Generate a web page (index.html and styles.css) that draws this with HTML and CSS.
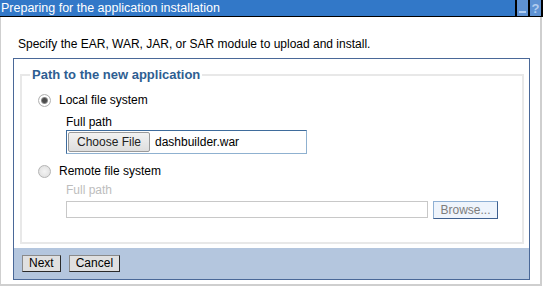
FILE: index.html
```html
<!DOCTYPE html>
<html lang="en">
<head>
  <meta charset="UTF-8" />
  <title>Preparing for the application installation</title>
  <link rel="stylesheet" href="styles.css">
</head>
<body>

<div class="window">
  <div class="titlebar">
    <span class="title">Preparing for the application installation</span>
    <svg class="tb-btns" width="28" height="16" viewBox="0 0 28 16">
      <rect x="0" y="0" width="28" height="16" fill="#000"/>
      <rect x="2" y="0" width="11" height="16" fill="#5e92d3"/>
      <rect x="15" y="0" width="11" height="16" fill="#5e92d3"/>
      <rect x="4" y="11" width="7" height="2" fill="#b2cdef"/>
      <text x="20.5" y="13" text-anchor="middle" class="tb-glyph">?</text>
    </svg>
  </div>
  <div class="body">
    <p class="intro">Specify the EAR, WAR, JAR, or SAR module to upload and install.</p>
    <div class="panel">
      <fieldset class="group">
        <legend>Path to the new application</legend>
        <label class="option"><input type="radio" name="src" checked> Local file system</label>
        <div class="field local">
          <div class="field-label">Full path</div>
          <div class="file-box">
            <button class="choose">Choose File</button>
            <span class="file-name">dashbuilder.war</span>
          </div>
        </div>
        <label class="option"><input type="radio" name="src"> Remote file system</label>
        <div class="field disabled">
          <div class="field-label">Full path</div>
          <div class="remote-row">
            <input type="text" class="remote-path" disabled>
            <button class="browse" disabled>Browse...</button>
          </div>
        </div>
      </fieldset>
      <div class="actions">
        <button class="btn">Next</button>
        <button class="btn">Cancel</button>
      </div>
    </div>
  </div>
</div>

</body>
</html>
```

FILE: styles.css
```css
body {
  margin: 0;
  font-family: "Liberation Sans", Arial, sans-serif;
  font-size: 12px;
  color: #000;
  background: #fff;
}
.window {
  width: 543px;
  height: 286px;
}
.titlebar {
  display: flex;
  justify-content: space-between;
  height: 16px;
  background: #3278c8;
  border-bottom: 1px solid #000;
  color: #fff;
}
.title {
  padding-left: 1px;
  font-size: 12.5px;
  line-height: 16px;
}
.tb-btns {
  display: block;
  flex: none;
}
.tb-glyph {
  font-family: "Liberation Sans", Arial, sans-serif;
  font-size: 13px;
  font-weight: bold;
  fill: #b2cdef;
}
.body {
  height: 267px;
  width: 539px;
  border-left: 1px solid #cfcfcf;
  border-right: 2px solid #cfcfcf;
  border-bottom: 2px solid #cfcfcf;
}
.intro {
  margin: 0;
  padding: 20px 0 0 17px;
  line-height: 15px;
}
.panel {
  margin: 6px 0 0 12px;
  width: 515px;
  border: 1px solid #4a6898;
  padding-top: 8px;
}
.group {
  margin: 0 5px 4px 6px;
  padding: 8px 0 15px 15px;
  border: 2px solid #e8e8e8;
}
.group legend {
  padding: 0 2px;
  margin-left: -7px;
  color: #2e5e92;
  font-size: 13px;
  font-weight: bold;
  line-height: 16px;
}
.option {
  display: flex;
  align-items: center;
  height: 18px;
}
.option input {
  appearance: none;
  width: 13px;
  height: 13px;
  margin: 0 8px 0 1px;
  border-radius: 50%;
  border: 1px solid #b4b4b4;
  background: radial-gradient(circle, #f4f4f4 0, #dcdcdc 100%);
}
.option input:checked {
  background: radial-gradient(circle, #4c4c4c 0, #4c4c4c 2px, #8a8a8a 3px, #fff 4px, #fff 5px, #cfcfcf 6px);
}
.field {
  padding-left: 29px;
  margin-bottom: 8px;
}
.field-label {
  line-height: 15px;
  margin: 3px 0 3px;
}
.local .field-label {
  margin: 6px 0 0;
}
.file-box {
  display: flex;
  align-items: center;
  width: 239px;
  height: 22px;
  border: 1px solid;
  border-color: #3f6c9c #8fb1d0 #8fb1d0 #3f6c9c;
}
.choose {
  height: 20px;
  width: 82px;
  margin-left: 1px;
  padding: 0;
  font: inherit;
  background: linear-gradient(#f2f2f2, #dedede);
  border: 1px solid #9a9a9a;
  border-radius: 2px;
  color: #222;
}
.file-name {
  margin-left: 5px;
}
.disabled .field-label {
  color: #bdbdbd;
}
.remote-row {
  display: flex;
  align-items: flex-start;
}
.remote-path {
  width: 360px;
  height: 15px;
  padding: 0;
  margin: 0;
  border: 1px solid #c8c8c8;
  background: #fff;
}
.browse {
  width: 65px;
  height: 18px;
  margin-left: 5px;
  padding: 0;
  font: inherit;
  color: #7d7d7d;
  background: #eef4fc;
  border: 1px solid;
  border-color: #8fb0d4 #3d5f8f #3d5f8f #8fb0d4;
}
.actions {
  display: flex;
  align-items: flex-start;
  gap: 8px;
  height: 31px;
  padding: 7px 0 0 8px;
  box-sizing: border-box;
  background: #b4c6de;
}
.btn {
  height: 17px;
  padding: 0 6px;
  font: inherit;
  line-height: 15px;
  background: #e0e0e0;
  border: 1px solid;
  border-color: #8a8a8a #2a2a2a #2a2a2a #8a8a8a;
}
```
